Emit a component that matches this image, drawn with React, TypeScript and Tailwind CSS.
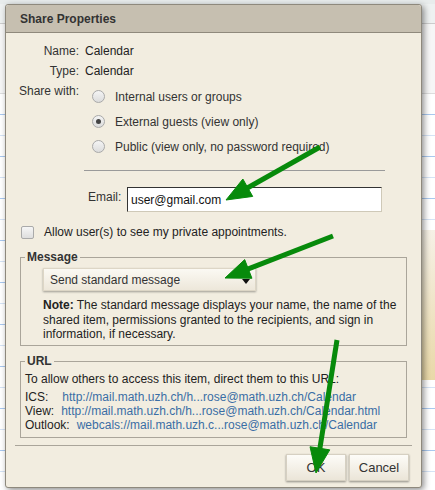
import React from "react";

const font = { fontFamily: '"Liberation Sans", Arial, sans-serif' };

function Radio({ checked, label }: { checked?: boolean; label: string }) {
	return (
		<label className="flex items-center h-[25px] gap-[10px]">
			<span className="w-[13px] h-[13px] rounded-full border border-[#a9a9a9] bg-gradient-to-b from-[#f4f4f4] to-[#dcdcdc] flex items-center justify-center">
				{checked && <span className="w-[5px] h-[5px] rounded-full bg-[#444]" />}
			</span>
			<span className="text-[#333]">{label}</span>
		</label>
	);
}

function Legend({ children, className = "" }: { children: React.ReactNode; className?: string }) {
	return (
		<legend className={`px-[2px] font-bold text-[#333] leading-[12px] ${className}`}>
			{children}
		</legend>
	);
}

// green pointer arrows drawn over the dialog
function Arrows() {
	const arrows = [
		{ x1: 320, y1: 147, x2: 226, y2: 200 },
		{ x1: 333, y1: 236, x2: 225, y2: 278 },
		{ x1: 337, y1: 340, x2: 316, y2: 473 },
	];
	return (
		<svg className="absolute inset-0 pointer-events-none" width="435" height="490">
			{arrows.map((a, i) => {
				const dx = a.x2 - a.x1;
				const dy = a.y2 - a.y1;
				const len = Math.hypot(dx, dy);
				const ux = dx / len;
				const uy = dy / len;
				const hl = 25;
				const hw = 10;
				const bx = a.x2 - ux * hl;
				const by = a.y2 - uy * hl;
				const pts = `${a.x2},${a.y2} ${bx - uy * hw},${by + ux * hw} ${bx + uy * hw},${by - ux * hw}`;
				return (
					<g key={i} fill="#078a0b" stroke="#078a0b">
						<line x1={a.x1} y1={a.y1} x2={bx + ux * 2} y2={by + uy * 2} strokeWidth="5" strokeLinecap="butt" />
						<polygon points={pts} strokeWidth="1" />
					</g>
				);
			})}
		</svg>
	);
}

export default function App() {
	return (
		<div className="relative w-[435px] h-[490px] overflow-hidden bg-white text-[12px]" style={font}>
			{/* calendar behind the dialog */}
			<div className="absolute inset-0 flex flex-col">
				<div className="h-[4px] bg-[#e8ecec]" />
				<div className="h-[20px] bg-[#eef1f1] border-b border-[#ccc]" />
				<div className="h-[70px] bg-[#f6f6f6] border-b border-[#ddd]" />
				<div className="flex-1 bg-[repeating-linear-gradient(to_bottom,#ffffff_0px,#ffffff_20px,#a9c8ef_20px,#a9c8ef_21px,#ffffff_21px,#ffffff_41px,#d5e3f5_41px,#d5e3f5_42px)]" />
			</div>
			<div className="absolute right-0 top-[230px] w-[14px] h-[150px] bg-gradient-to-b from-[#f6f1e6] to-[#e9d8a8]" />

			{/* dialog */}
			<div className="absolute left-[5px] top-[4px] w-[417px] h-[484px] flex flex-col bg-[#f2ede0] border border-[#8e897d] rounded-[3px] shadow-[2px_2px_6px_rgba(0,0,0,0.45)]">
				<div className="h-[28px] shrink-0 flex items-center px-[14px] bg-[#c6bfb0] border-b border-[#8f897c] rounded-t-[3px] font-bold text-[#333]">
					Share Properties
				</div>

				<div className="flex flex-col px-[9px] text-[#222]">
					<div className="grid grid-cols-[64px_1fr] gap-x-[6px] pt-[8px]">
						<span className="text-right text-[#333] h-[20px] leading-[20px]">Name:</span>
						<span className="h-[20px] leading-[20px]">Calendar</span>
						<span className="text-right text-[#333] h-[20px] leading-[20px]">Type:</span>
						<span className="h-[20px] leading-[20px]">Calendar</span>
						<span className="text-right text-[#333] leading-[20px] whitespace-nowrap">Share with:</span>
						<div className="flex flex-col pl-[7px] pt-[3px]">
							<Radio label="Internal users or groups" />
							<Radio label="External guests (view only)" checked />
							<Radio label="Public (view only, no password required)" />
						</div>
					</div>

					<div className="ml-[69px] mr-[27px] mt-[11px] border-t border-[#9a9a9a]" />

					<div className="flex items-start mt-[16px] ml-[73px]">
						<span className="text-[#333] w-[39px] mt-[1px]">Email:</span>
						<input
							className="w-[255px] h-[25px] bg-white border border-[#cfc9b8] border-t-[#333] border-l-[#333] px-[3px] text-[12px] text-[#111] outline-none"
							style={font}
							defaultValue="user@gmail.com"
						/>
					</div>

					<label className="flex items-center gap-[10px] mt-[11px] ml-[6px]">
						<span className="w-[13px] h-[13px] rounded-[2px] border border-[#aaa] bg-gradient-to-b from-[#f6f6f6] to-[#dedede]" />
						<span>Allow user(s) to see my private appointments.</span>
					</label>

					<fieldset className="mx-[5px] mt-[10px] border border-[#aaa59a] h-[95px] pl-[22px] pr-[8px] pt-[5px]">
						<Legend className="-ml-[18px]">Message</Legend>
						<div className="w-[213px] h-[23px] flex items-center justify-between pl-[6px] pr-[5px] bg-gradient-to-b from-[#fbf9f3] to-[#ede7da] border border-[#ddd6c6] shadow-[0_1px_2px_rgba(0,0,0,0.35)] text-[#333]">
							<span>Send standard message</span>
							<svg width="8" height="5" viewBox="0 0 8 5" className="mt-[3px]">
								<path d="M0 0h8L4 5z" fill="#111" />
							</svg>
						</div>
						<p className="mt-[7px] leading-[14.5px] text-[#222]">
							<b>Note:</b> The standard message displays your name, the name of the shared item, permissions granted to the recipients, and sign in information, if necessary.
						</p>
					</fieldset>

					<fieldset className="mx-[5px] mt-[9px] border border-[#aaa59a] px-[4px] pb-[5px] leading-[14px]">
						<Legend>URL</Legend>
						<p className="mt-[5px]">To allow others to access this item, direct them to this URL:</p>
						<div className="mt-[4px] flex gap-[14px]">
							<span>ICS:</span>
							<a className="text-[#3a6ea5]">http://mail.math.uzh.ch/h...rose@math.uzh.ch/Calendar</a>
						</div>
						<div className="flex gap-[7px]">
							<span>View:</span>
							<a className="text-[#3a6ea5]">http://mail.math.uzh.ch/h...rose@math.uzh.ch/Calendar.html</a>
						</div>
						<div className="flex gap-[7px]">
							<span>Outlook:</span>
							<a className="text-[#3a6ea5]">webcals://mail.math.uzh.c...rose@math.uzh.ch/Calendar</a>
						</div>
					</fieldset>

					<div className="mt-[7px] border-t border-[#aaa59a]" />

					<div className="flex justify-end gap-[3px] mt-[8px] mr-[3px]">
						<button className="w-[60px] h-[27px] bg-gradient-to-b from-[#fdfcf8] to-[#ebe5d8] border border-[#d6d0c2] shadow-[0_1px_2px_rgba(0,0,0,0.4)] text-[13px] text-[#333]">
							OK
						</button>
						<button className="w-[60px] h-[27px] bg-gradient-to-b from-[#fdfcf8] to-[#ebe5d8] border border-[#d6d0c2] shadow-[0_1px_2px_rgba(0,0,0,0.4)] text-[13px] text-[#333]">
							Cancel
						</button>
					</div>
				</div>
			</div>

			<Arrows />
		</div>
	);
}
